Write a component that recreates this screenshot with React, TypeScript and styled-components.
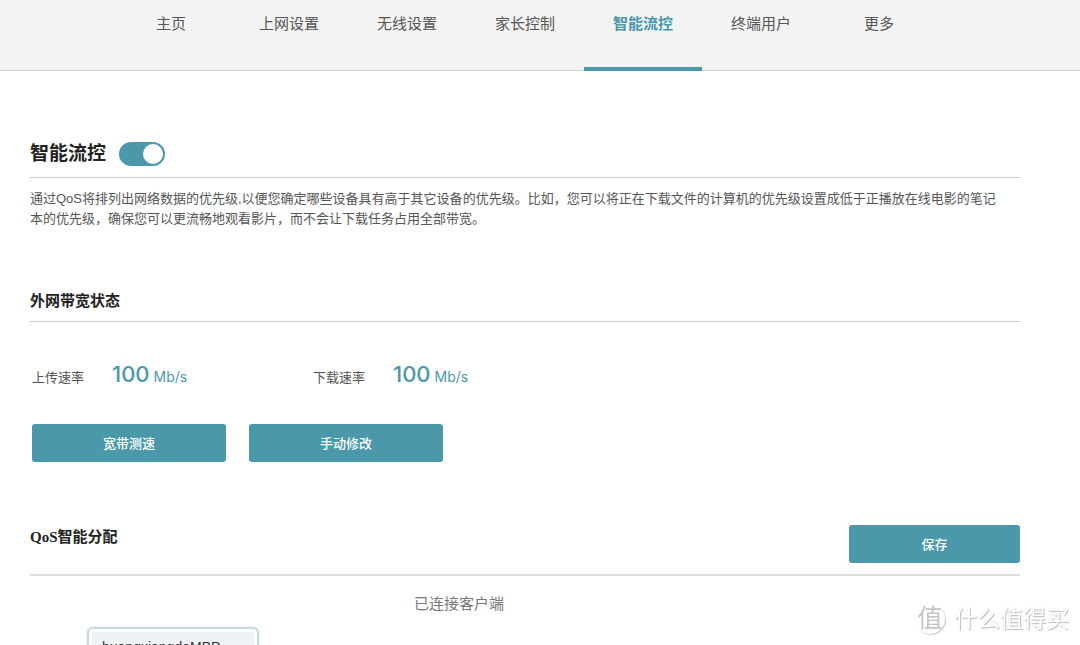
import React, { useState } from "react";
import styled, { createGlobalStyle } from "styled-components";

const teal = "#4a98aa";
const sans = '"Liberation Sans", "Noto Sans CJK SC", sans-serif';

const GlobalStyle = createGlobalStyle`
  * { box-sizing: border-box; }
  body {
    margin: 0;
    background: #fff;
    color: #555;
    font-family: ${sans};
    font-size: 13px;
  }
  h1, h2, p { margin: 0; }
`;

const Header = styled.header`
  background: #f3f3f3;
  border-bottom: 1px solid #d6d6d6;
`;

const Nav = styled.nav`
  display: flex;
  justify-content: center;
  padding-right: 30px;
`;

const NavLink = styled.a<{ $active?: boolean }>`
  flex: 0 1 118px;
  height: 71px;
  margin-bottom: -1px;
  padding-top: 13px;
  border-bottom: 4px solid ${(p) => (p.$active ? teal : "transparent")};
  color: ${(p) => (p.$active ? teal : "#555")};
  font-size: 15px;
  font-weight: ${(p) => (p.$active ? 700 : 400)};
  line-height: 22px;
  text-align: center;
  text-decoration: none;
  white-space: nowrap;
`;

const Main = styled.main`
  padding: 68px 60px 30px 30px;
`;

const TitleBar = styled.div`
  display: flex;
  align-items: center;
  gap: 13px;
  padding-bottom: 8px;
  border-bottom: 1px solid #ccc;
`;

const Title = styled.h1`
  color: #222;
  font-size: 19px;
  font-weight: 700;
  line-height: 30px;
`;

const Switch = styled.input`
  appearance: none;
  display: flex;
  align-items: center;
  width: 46px;
  height: 24px;
  margin: 0;
  padding: 2px;
  border-radius: 12px;
  background: #bbb;
  cursor: pointer;

  &::before {
    content: "";
    width: 20px;
    height: 20px;
    border-radius: 50%;
    background: #fff;
  }

  &:checked {
    justify-content: flex-end;
    background: ${teal};
  }
`;

const Description = styled.p`
  padding: 11px 16px 60px 0;
  line-height: 20px;
`;

const SectionTitle = styled.h2`
  color: #222;
  font-family: "Liberation Serif", "Noto Sans CJK SC", serif;
  font-size: 15px;
  font-weight: 700;
  line-height: 24px;
`;

const SectionBar = styled.div`
  display: flex;
  justify-content: space-between;
  align-items: flex-start;
  padding-bottom: 8px;
  border-bottom: 1px solid #ccc;
`;

const Rates = styled.dl`
  display: flex;
  margin: 0;
  padding: 37px 2px 32px;
`;

const Rate = styled.div`
  display: flex;
  align-items: baseline;
  width: 281px;
`;

const RateName = styled.dt`
  width: 80px;
`;

const RateValue = styled.dd`
  margin: 0;
  color: ${teal};
  font-family: Inter, sans-serif;
  font-size: 14px;
  line-height: 30px;
`;

const Amount = styled.span`
  font-size: 22px;
  font-weight: 500;
`;

const Actions = styled.div`
  display: flex;
  gap: 23px;
  padding: 0 2px 63px;
`;

const Button = styled.button<{ $width: number }>`
  width: ${(p) => p.$width}px;
  height: 38px;
  padding: 0 0 1px;
  border: 0;
  border-radius: 3px;
  background: ${teal};
  color: #fff;
  font-family: ${sans};
  font-size: 13px;
  font-weight: 500;
  cursor: pointer;
`;

const AllocationBar = styled(SectionBar)`
  padding-bottom: 11px;
  border-bottom-width: 2px;
  border-color: #ddd;
`;

const ClientsTitle = styled.p`
  padding: 16px 132px 11px 0;
  color: #777;
  font-size: 15px;
  line-height: 24px;
  text-align: center;
`;

const Client = styled.div`
  width: 172px;
  height: 60px;
  margin-left: 57px;
  padding: 3px;
  border: 2px solid #c9d8dc;
  border-radius: 6px;
  background: linear-gradient(#ebf0f2, #fff) content-box, #fff;
  box-shadow: 0 0 3px #c5dde3;
`;

const ClientName = styled.div`
  padding: 5px 10px;
  color: #333;
  font-size: 14px;
  line-height: 20px;
`;

const Watermark = styled.div`
  position: fixed;
  right: 11px;
  bottom: 9px;
  display: flex;
  align-items: center;
  gap: 9px;
  color: #fff;
  font-size: 23px;
  line-height: 34px;
  text-shadow: 1px 1px 1px #bbb, 0 0 1px #ccc;
  pointer-events: none;
`;

const Seal = styled.span`
  width: 30px;
  height: 30px;
  border-radius: 50%;
  box-shadow: 1px 1px 1px #ccc;
  color: #c4c4c4;
  font-size: 25px;
  line-height: 28px;
  text-align: center;
  text-shadow: none;
`;

const tabs = ["主页", "上网设置", "无线设置", "家长控制", "智能流控", "终端用户", "更多"];
const rates = [
  { name: "上传速率", amount: 100 },
  { name: "下载速率", amount: 100 },
];

export default function App() {
  const [enabled, setEnabled] = useState(true);
  return (
    <>
      <GlobalStyle />
      <Header>
        <Nav>
          {tabs.map((tab) => (
            <NavLink key={tab} href="#" $active={tab === "智能流控"}>
              {tab}
            </NavLink>
          ))}
        </Nav>
      </Header>
      <Main>
        <TitleBar>
          <Title id="qos-title">智能流控</Title>
          <Switch
            type="checkbox"
            role="switch"
            aria-labelledby="qos-title"
            checked={enabled}
            onChange={(e) => setEnabled(e.target.checked)}
          />
        </TitleBar>
        <Description>
          通过QoS将排列出网络数据的优先级,以便您确定哪些设备具有高于其它设备的优先级。比如，您可以将正在下载文件的计算机的优先级设置成低于正播放在线电影的笔记本的优先级，确保您可以更流畅地观看影片，而不会让下载任务占用全部带宽。
        </Description>
        <SectionBar>
          <SectionTitle>外网带宽状态</SectionTitle>
        </SectionBar>
        <Rates>
          {rates.map((rate) => (
            <Rate key={rate.name}>
              <RateName>{rate.name}</RateName>
              <RateValue>
                <Amount>{rate.amount}</Amount> Mb/s
              </RateValue>
            </Rate>
          ))}
        </Rates>
        <Actions>
          <Button type="button" $width={194}>宽带测速</Button>
          <Button type="button" $width={194}>手动修改</Button>
        </Actions>
        <AllocationBar>
          <SectionTitle>QoS智能分配</SectionTitle>
          <Button type="button" $width={171}>保存</Button>
        </AllocationBar>
        <section>
          <ClientsTitle>已连接客户端</ClientsTitle>
          <Client>
            <ClientName>huangxiangdeMBP</ClientName>
          </Client>
        </section>
      </Main>
      <Watermark>
        <Seal>值</Seal>
        什么值得买
      </Watermark>
    </>
  );
}
